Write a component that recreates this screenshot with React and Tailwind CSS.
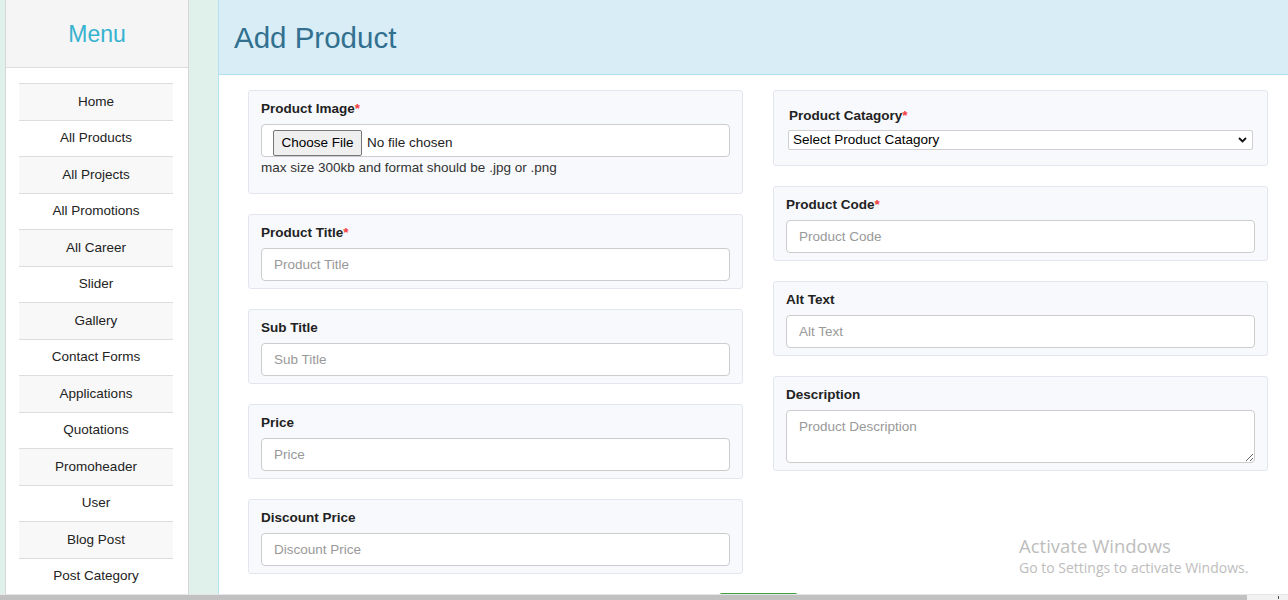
import React from "react";

const menu = [
  "Home",
  "All Products",
  "All Projects",
  "All Promotions",
  "All Career",
  "Slider",
  "Gallery",
  "Contact Forms",
  "Applications",
  "Quotations",
  "Promoheader",
  "User",
  "Blog Post",
  "Post Category",
];

function Label({ children, req }) {
  return (
    <div className="text-[13.5px] font-bold leading-4 text-[#222]">
      {children}
      {req && <span className="text-[#f23b3b]">*</span>}
    </div>
  );
}

function TextInput({ placeholder }) {
  return (
    <input
      placeholder={placeholder}
      className="block w-full h-[33px] border border-[#cccccc] rounded-[4px] bg-white pl-[12px] text-[13.5px] text-[#333] placeholder:text-[#999] outline-none"
    />
  );
}

function Card({ label, req, children, className = "" }) {
  return (
    <div className={"border border-[#e3e6ee] bg-[#f8f9fc] rounded-[3px] px-[12px] pt-[10px] pb-[7px] " + className}>
      <Label req={req}>{label}</Label>
      <div className="mt-[7px]">{children}</div>
    </div>
  );
}

export default function App() {
  return (
    <div className="w-[1288px] h-[600px] flex flex-col overflow-hidden bg-[#e0f1ec] font-['Liberation_Sans',Arial,sans-serif] relative">
      <div className="flex h-[594px] overflow-hidden">
        <div className="w-[5px] shrink-0" />
        <aside className="w-[184px] shrink-0 border-x border-[#d6d6d6] bg-white flex flex-col">
          <div className="h-[68px] bg-[#f5f5f5] border-b border-[#dddddd] flex items-center justify-center pt-[2px] text-[23px] text-[#35b2d0]">
            Menu
          </div>
          <div className="mt-[15px] ml-[13px] w-[154px]">
            {menu.map((m, i) => (
              <div
                key={m}
                className={
                  "h-[36.5px] border-t border-[#dddddd] flex items-center justify-center text-[13.5px] text-[#222] " +
                  (i % 2 === 0 ? "bg-[#f8f8f8]" : "bg-white")
                }
              >
                {m}
              </div>
            ))}
          </div>
        </aside>
        <div className="w-[29px] shrink-0" />
        <main className="flex-1 border-l border-[#b4e3ef] bg-white flex flex-col min-w-0 overflow-hidden">
          <header className="h-[75px] shrink-0 bg-[#d9edf7] border-b border-[#ade1ee] flex items-center pl-[15px] pt-[2px]">
            <h1 className="text-[29.5px] text-[#31708f] leading-none">Add Product</h1>
          </header>
          <div className="pt-[15px] pl-[29px] pr-[20px]">
            <div className="grid grid-cols-2 gap-x-[30px] items-start">
              <div className="flex flex-col gap-[20px]">
                <div className="border border-[#e3e6ee] bg-[#f8f9fc] rounded-[3px] px-[12px] pt-[10px] pb-[15px]">
                  <Label req>Product Image</Label>
                  <div className="mt-[7px] h-[33px] border border-[#cccccc] rounded-[4px] bg-white flex items-end pl-[11px]">
                    <div className="h-[26px] w-[89px] border border-[#767676] rounded-[2px] bg-[#efefef] flex items-center justify-center text-[13.5px] text-black">
                      Choose File
                    </div>
                    <div className="ml-[5px] h-[26px] flex items-center text-[13.5px] text-[#222]">No file chosen</div>
                  </div>
                  <div className="text-[13.5px] leading-5 text-[#333] pt-[1px]">max size 300kb and format should be .jpg or .png</div>
                </div>
                <Card label="Product Title" req>
                  <TextInput placeholder="Product Title" />
                </Card>
                <Card label="Sub Title">
                  <TextInput placeholder="Sub Title" />
                </Card>
                <Card label="Price">
                  <TextInput placeholder="Price" />
                </Card>
                <Card label="Discount Price">
                  <TextInput placeholder="Discount Price" />
                </Card>
              </div>
              <div className="flex flex-col gap-[20px]">
                <div className="border border-[#e3e6ee] bg-[#f8f9fc] rounded-[3px] px-[14px] pt-[17px] pb-[15px]">
                  <div className="ml-[1px]">
                    <Label req>Product Catagory</Label>
                  </div>
                  <div className="mt-[6px] relative h-[20px]">
                    <select className="appearance-none block w-full h-[20px] border border-[#d0d0d0] rounded-[2px] bg-white pl-[4px] text-[13.5px] leading-[18px] text-black outline-none">
                      <option>Select Product Catagory</option>
                    </select>
                    <svg className="absolute right-[6px] top-[7px] pointer-events-none" width="9" height="6" viewBox="0 0 9 6">
                      <path d="M1 1 L4.5 4.5 L8 1" fill="none" stroke="#111" strokeWidth="1.8" />
                    </svg>
                  </div>
                </div>
                <Card label="Product Code" req>
                  <TextInput placeholder="Product Code" />
                </Card>
                <Card label="Alt Text">
                  <TextInput placeholder="Alt Text" />
                </Card>
                <Card label="Description">
                  <textarea
                    placeholder="Product Description"
                    className="block w-full h-[53px] border border-[#cccccc] rounded-[4px] bg-white pl-[12px] pt-[6px] text-[13.5px] leading-5 text-[#333] placeholder:text-[#999] outline-none resize-y"
                  />
                </Card>
              </div>
            </div>
            <div className="mt-[19px] flex justify-center">
              <div className="w-[81px] h-[34px] bg-[#5cb85c] border border-[#3f9f3f] rounded-[4px]" />
            </div>
          </div>
        </main>
      </div>
      <div className="h-[6px] shrink-0 bg-[#f1f1f1] border-t border-[#e6e6e6] relative">
        <div className="h-[5px] w-[1247px] bg-[#c1c1c1]" />
        <div className="absolute right-[9px] top-[1px] w-[1px] h-[3px] bg-[#505050]" />
      </div>
      <div className="absolute left-[1019px] top-[533px] pointer-events-none font-['Open_Sans','Noto_Sans',sans-serif] text-[#bdbdbd]">
        <div className="text-[18.5px] leading-[26px]">Activate Windows</div>
        <div className="text-[14px] leading-[20px] -mt-[1px]">Go to Settings to activate Windows.</div>
      </div>
    </div>
  );
}
